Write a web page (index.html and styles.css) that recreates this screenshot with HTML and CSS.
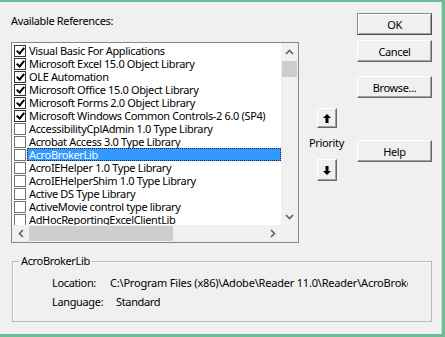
FILE: index.html
```html
<!DOCTYPE html>
<html lang="en">
<head>
<meta charset="UTF-8">
<title>References - VBAProject</title>
<link rel="stylesheet" href="styles.css">
</head>
<body>
    <div class="window">
        <div class="top">
            <div class="refs">
                <div class="caption">Available References:</div>
                <div class="list">
                    <div class="items">
                        <div class="item"><span class="check on"></span><span class="text">Visual Basic For Applications</span></div>
                        <div class="item"><span class="check on"></span><span class="text">Microsoft Excel 15.0 Object Library</span></div>
                        <div class="item"><span class="check on"></span><span class="text">OLE Automation</span></div>
                        <div class="item"><span class="check on"></span><span class="text">Microsoft Office 15.0 Object Library</span></div>
                        <div class="item"><span class="check on"></span><span class="text">Microsoft Forms 2.0 Object Library</span></div>
                        <div class="item"><span class="check on"></span><span class="text">Microsoft Windows Common Controls-2 6.0 (SP4)</span></div>
                        <div class="item"><span class="check"></span><span class="text">AccessibilityCplAdmin 1.0 Type Library</span></div>
                        <div class="item"><span class="check"></span><span class="text">Acrobat Access 3.0 Type Library</span></div>
                        <div class="item selected"><span class="check"></span><span class="text">AcroBrokerLib</span></div>
                        <div class="item"><span class="check"></span><span class="text">AcroIEHelper 1.0 Type Library</span></div>
                        <div class="item"><span class="check"></span><span class="text">AcroIEHelperShim 1.0 Type Library</span></div>
                        <div class="item"><span class="check"></span><span class="text">Active DS Type Library</span></div>
                        <div class="item"><span class="check"></span><span class="text">ActiveMovie control type library</span></div>
                        <div class="item"><span class="check"></span><span class="text">AdHocReportingExcelClientLib</span></div>
                    </div>
                    <div class="vscroll">
                        <div class="sbtn"><svg width="9" height="6" viewBox="0 0 9 6"><polyline points="1,5 4.5,1.5 8,5" fill="none" stroke="#606060" stroke-width="1.6"/></svg></div>
                        <div class="vthumb"></div>
                        <div class="vtrack"></div>
                        <div class="sbtn"><svg width="9" height="6" viewBox="0 0 9 6"><polyline points="1,1 4.5,4.5 8,1" fill="none" stroke="#606060" stroke-width="1.6"/></svg></div>
                    </div>
                    <div class="hscroll">
                        <div class="sbtn"><svg width="6" height="9" viewBox="0 0 6 9"><polyline points="5,1 1.5,4.5 5,8" fill="none" stroke="#606060" stroke-width="1.6"/></svg></div>
                        <div class="hthumb"></div>
                        <div class="htrack"></div>
                        <div class="sbtn"><svg width="6" height="9" viewBox="0 0 6 9"><polyline points="1,1 4.5,4.5 1,8" fill="none" stroke="#606060" stroke-width="1.6"/></svg></div>
                    </div>
                    <div class="corner"></div>
                </div>
            </div>
            <div class="priority">
                <div class="arrow-btn up"><svg width="8" height="9" viewBox="0 0 8 9"><path d="M4 0 L8 4 L5.5 4 L5.5 9 L2.5 9 L2.5 4 L0 4 Z" fill="#000"/></svg></div>
                <div class="priority-label">Priority</div>
                <div class="arrow-btn down"><svg width="8" height="9" viewBox="0 0 8 9"><path d="M4 9 L8 5 L5.5 5 L5.5 0 L2.5 0 L2.5 5 L0 5 Z" fill="#000"/></svg></div>
            </div>
            <div class="buttons">
                <div class="btn default ok">OK</div>
                <div class="btn cancel">Cancel</div>
                <div class="btn browse">Browse...</div>
                <div class="btn help">Help</div>
            </div>
        </div>
        <fieldset class="group">
            <legend>AcroBrokerLib</legend>
            <div class="info">
                <div class="row"><span class="label loc">Location:</span><span class="value path">C:\Program Files (x86)\Adobe\Reader 11.0\Reader\AcroBroker.exe</span></div>
                <div class="row"><span class="label lang">Language:</span><span class="value">Standard</span></div>
            </div>
        </fieldset>
    </div>
</body>
</html>
```
FILE: styles.css
```css
body {
    margin: 0;
    background: #f0f0f0;
    font-family: "Noto Sans", "Open Sans", sans-serif;
    font-size: 11px;
    letter-spacing: -0.35px;
    color: #000;
}
.window {
    width: 445px;
    height: 337px;
    box-sizing: border-box;
    background: #f0f0f0;
    border-top: 2px solid #6bbf93;
    border-right: 3px solid #6bbf93;
    border-bottom: 3px solid #6bbf93;
    box-shadow: inset -1px 0 #d9d9d9;
    overflow: hidden;
}
.top {
    display: flex;
    align-items: flex-start;
}
.refs {
    margin-left: 11px;
    width: 288px;
}
.caption {
    margin-top: 12px;
    line-height: 14px;
}
.list {
    margin-top: 14px;
    height: 201px;
    box-sizing: border-box;
    border: 1px solid #828790;
    background: #fff;
    display: grid;
    grid-template-columns: 1fr 17px;
    grid-template-rows: 1fr 17px;
}
.items {
    overflow: hidden;
    padding-top: 1px;
}
.item {
    display: flex;
    align-items: center;
    height: 13px;
    padding-left: 2px;
    white-space: nowrap;
}
.check {
    flex: none;
    width: 10px;
    height: 10px;
    border: 1px solid #707070;
    background: #fff;
    position: relative;
}
.check.on {
    border-color: #333;
}
.check.on::after {
    content: "";
    position: absolute;
    left: 3px;
    top: 0px;
    width: 3px;
    height: 6px;
    border: solid #000;
    border-width: 0 2px 2px 0;
    transform: rotate(40deg);
}
.text {
    margin-left: 1px;
    padding-left: 2px;
    line-height: 13px;
}
.selected .text {
    flex: 1;
    background: #3399ff;
    color: #f4f8ff;
    outline: 1px dotted #222;
    outline-offset: -1px;
}
.vscroll {
    background: #f0f0f0;
    display: flex;
    flex-direction: column;
}
.hscroll {
    background: #f0f0f0;
    display: flex;
}
.corner {
    background: #f0f0f0;
}
.sbtn {
    flex: none;
    width: 17px;
    height: 17px;
    display: flex;
    align-items: center;
    justify-content: center;
}
.vthumb {
    flex: none;
    height: 16px;
    margin: 1px 1px 0;
    background: #cdcdcd;
}
.vtrack, .htrack {
    flex: 1;
}
.hthumb {
    flex: none;
    width: 144px;
    margin: 1px 0;
    background: #cdcdcd;
}
.priority {
    margin-left: 9px;
    width: 37px;
    padding-top: 106px;
    display: flex;
    flex-direction: column;
    align-items: center;
}
.arrow-btn {
    width: 20px;
    height: 20px;
    box-sizing: border-box;
    display: flex;
    align-items: center;
    justify-content: center;
    background: #f0f0f0;
    border: 1px solid;
    border-color: #fff #696969 #696969 #fff;
    box-shadow: inset -1px -1px #a0a0a0;
}
.arrow-btn.down {
    margin-top: 9px;
    height: 22px;
}
.priority-label {
    margin-top: 8px;
    line-height: 14px;
}
.buttons {
    margin-left: 12px;
    width: 75px;
    display: flex;
    flex-direction: column;
}
.btn {
    height: 22px;
    box-sizing: border-box;
    display: flex;
    align-items: center;
    justify-content: center;
    background: #f0f0f0;
    border: 1px solid;
    border-color: #fff #696969 #696969 #fff;
    box-shadow: inset -1px -1px #a0a0a0;
}
.btn.default {
    border-color: #8a8a8a #505050 #505050 #8a8a8a;
    box-shadow: inset 1px 1px #fff, inset -1px -1px #a0a0a0;
}
.ok {
    margin-top: 11px;
}
.cancel {
    margin-top: 5px;
}
.browse {
    margin-top: 14px;
}
.help {
    margin-top: 42px;
}
.group {
    margin: 11px 0 0 12px;
    width: 420px;
    height: 68px;
    box-sizing: border-box;
    padding: 0;
    border: 1px solid #b9b9b9;
    box-shadow: inset 1px 1px #fff;
}
.group legend {
    margin-left: 6px;
    padding: 0 2px;
    line-height: 14px;
}
.info {
    padding: 8px 0 0 39px;
}
.row {
    display: flex;
    line-height: 14px;
    margin-bottom: 5px;
    white-space: nowrap;
}
.label.loc {
    width: 58px;
}
.label.lang {
    width: 64px;
}
.value.path {
    width: 298px;
    overflow: hidden;
    letter-spacing: -0.2px;
}
```
